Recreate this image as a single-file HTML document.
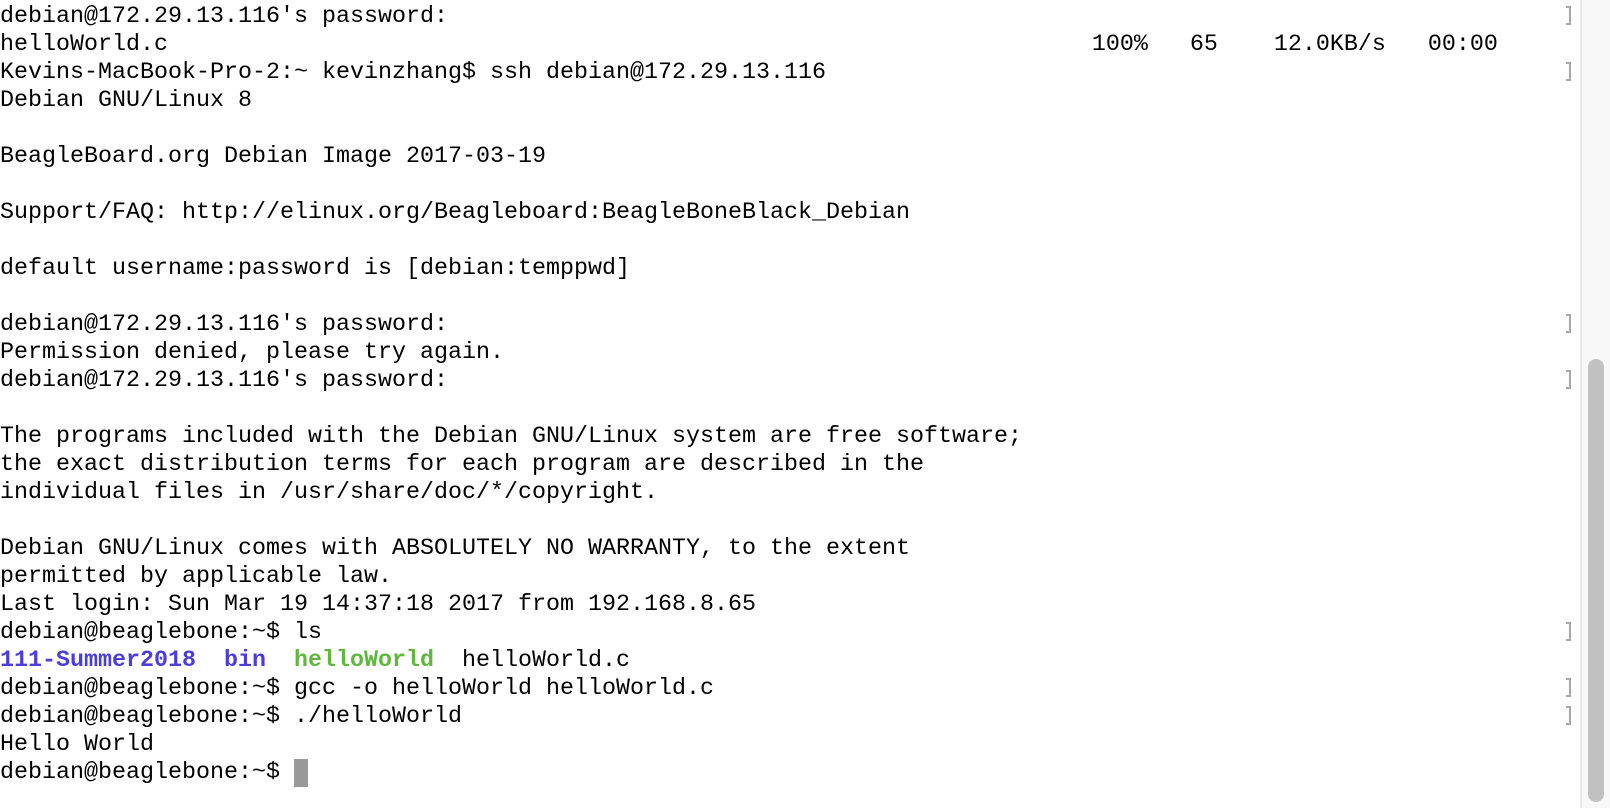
<!DOCTYPE html>
<html><head><meta charset="utf-8"><style>
html,body{margin:0;padding:0;width:1610px;height:808px;overflow:hidden;background:#fff;}
pre{position:absolute;left:0;top:3px;margin:0;font-family:"Liberation Mono",monospace;font-size:23.33px;line-height:28px;color:#000;}
.b{color:#4b3ddb;font-weight:bold}
.g{color:#5db83c;font-weight:bold}
.cur{display:inline-block;width:14px;height:28px;background:#999;vertical-align:top}
.br{position:absolute;left:1566px;width:5px;height:19px;border:2px solid #a8a8a8;border-left:none;box-sizing:border-box}
#track{position:absolute;left:1580px;top:0;width:30px;height:808px;background:#f8f8f8;border-left:2px solid #e8e8e8;box-sizing:border-box}
#thumb{position:absolute;left:1588px;top:359px;width:16px;height:443px;background:#c1c1c1;border-radius:8px}
</style></head><body>
<pre>debian@172.29.13.116's password:
helloWorld.c                                                                  100%   65    12.0KB/s   00:00
Kevins-MacBook-Pro-2:~ kevinzhang$ ssh debian@172.29.13.116
Debian GNU/Linux 8

BeagleBoard.org Debian Image 2017-03-19

Support/FAQ: http://elinux.org/Beagleboard:BeagleBoneBlack_Debian

default username:password is [debian:temppwd]

debian@172.29.13.116's password:
Permission denied, please try again.
debian@172.29.13.116's password:

The programs included with the Debian GNU/Linux system are free software;
the exact distribution terms for each program are described in the
individual files in /usr/share/doc/*/copyright.

Debian GNU/Linux comes with ABSOLUTELY NO WARRANTY, to the extent
permitted by applicable law.
Last login: Sun Mar 19 14:37:18 2017 from 192.168.8.65
debian@beaglebone:~$ ls
<span class="b">111-Summer2018</span>  <span class="b">bin</span>  <span class="g">helloWorld</span>  helloWorld.c
debian@beaglebone:~$ gcc -o helloWorld helloWorld.c
debian@beaglebone:~$ ./helloWorld
Hello World
debian@beaglebone:~$ <span class="cur"></span></pre>
<div class="br" style="top:6px"></div>
<div class="br" style="top:62px"></div>
<div class="br" style="top:314px"></div>
<div class="br" style="top:370px"></div>
<div class="br" style="top:622px"></div>
<div class="br" style="top:678px"></div>
<div class="br" style="top:706px"></div>
<div id="track"></div><div id="thumb"></div>
</body></html>
